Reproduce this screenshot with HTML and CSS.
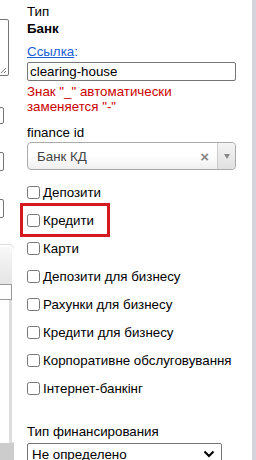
FILE: index.html
```html
<!DOCTYPE html>
<html lang="ru">
<head>
    <meta charset="UTF-8">
    <meta name="viewport" content="width=device-width, initial-scale=1.0">
    <title>Банк</title>
    <link rel="stylesheet" href="styles.css">
</head>
<body>

    <!-- cut off column on the left -->
    <div class="side">
        <div class="side-textarea">
            <svg class="resize" width="7" height="7" viewBox="0 0 7 7">
                <path d="M1 6 L6 1 M4 6 L6 4" stroke="#777" stroke-width="1"/>
            </svg>
        </div>
        <div class="side-input first"></div>
        <div class="side-input"></div>
        <div class="side-input"></div>
        <div class="side-panel">
            <div class="side-panel-head">
                <div class="side-panel-box"></div>
            </div>
            <div class="side-panel-body"></div>
        </div>
        <div class="side-foot"></div>
    </div>

    <div class="main">
        <div class="field-title">Тип</div>
        <div class="field-value">Банк</div>

        <div class="field-title link-row"><a href="#">Ссылка</a>:</div>
        <input type="text" class="slug-input" value="clearing-house">
        <div class="hint">Знак "_" автоматически<br>заменяется "-"</div>

        <div class="field-title finance">finance id</div>
        <div class="select2">
            <span class="select2-text">Банк КД</span>
            <span class="select2-clear">×</span>
            <span class="select2-arrow"><b></b></span>
        </div>

        <div class="checks">
            <label class="check-row"><input type="checkbox"> Депозити</label>
            <label class="check-row"><input type="checkbox"> Кредити<span class="marker"></span></label>
            <label class="check-row"><input type="checkbox"> Карти</label>
            <label class="check-row"><input type="checkbox"> Депозити для бизнесу</label>
            <label class="check-row"><input type="checkbox"> Рахунки для бизнесу</label>
            <label class="check-row"><input type="checkbox"> Кредити для бизнесу</label>
            <label class="check-row"><input type="checkbox"> Корпоративне обслуговування</label>
            <label class="check-row"><input type="checkbox"> Інтернет-банкінг</label>
        </div>

        <div class="field-title funding">Тип финансирования</div>
        <div class="plain-select">
            <span>Не определено</span>
            <svg width="12" height="8" viewBox="0 0 12 8">
                <path d="M1.5 1.5 L6 6 L10.5 1.5" fill="none" stroke="#000" stroke-width="2"/>
            </svg>
        </div>
    </div>

    <div class="scroll-edge"></div>

</body>
</html>
```

FILE: styles.css
```css
* {
    box-sizing: border-box;
}

body {
    margin: 0;
    width: 256px;
    height: 460px;
    overflow: hidden;
    display: flex;
    font-family: 'Liberation Sans', Arial, sans-serif;
    font-size: 13.33px;
    color: #000;
    background: #fff;
}

/* left column, mostly hidden */
.side {
    width: 14px;
    flex-shrink: 0;
    overflow: hidden;
}

.side-textarea {
    position: relative;
    margin-top: 19px;
    margin-left: -40px;
    width: 49px;
    height: 57px;
    border: 1px solid #767676;
    border-radius: 2px;
}

.resize {
    position: absolute;
    right: 1px;
    bottom: 1px;
}

.side-input {
    margin-top: 28px;
    margin-left: -40px;
    width: 44px;
    height: 19px;
    border: 1px solid #767676;
    border-radius: 2px;
}

.side-input.first {
    margin-top: 31px;
    height: 17px;
}

.side-panel {
    margin-top: 26px;
    margin-left: -40px;
    width: 55px;
    height: 199px;
    border: 1px solid #ddd;
    border-radius: 0 6px 0 0;
    padding: 2px 2px 0 0;
}

.side-panel-head {
    height: 53px;
    background: linear-gradient(#f8f8f8, #dcdcdc);
    padding-top: 37px;
}

.side-panel-box {
    width: 51px;
    height: 16px;
    border: 1px solid #999;
    background: #fff;
}

.side-panel-body {
    height: 144px;
    border-right: 3px solid #ddd;
    background: #fff;
}

.side-foot {
    margin-left: -40px;
    height: 20px;
    background: #ccc;
}

/* main form */
.main {
    margin-left: 13px;
    width: 209px;
    flex-shrink: 0;
}

.field-title {
    line-height: 15px;
}

.field-title:first-child {
    margin-top: 4px;
}

.field-value {
    font-weight: bold;
    line-height: 15px;
    margin-top: 2px;
}

.link-row {
    margin-top: 8px;
    color: #1a4fc9;
}

.link-row a {
    color: #1a5fd8;
}

.slug-input {
    display: block;
    width: 209px;
    height: 19px;
    margin: 3px 0 0;
    padding: 0 2px;
    border: 1px solid #767676;
    border-radius: 2px;
    font-family: 'Liberation Sans', Arial, sans-serif;
    font-size: 13.33px;
    color: #000;
}

.hint {
    color: #cc0000;
    line-height: 15px;
    margin-top: 3px;
}

.finance {
    margin-top: 11px;
}

.select2 {
    display: flex;
    align-items: center;
    height: 28px;
    margin-top: 2px;
    border: 1px solid #aaa;
    border-radius: 4px;
    background: linear-gradient(#fff 50%, #eee);
    color: #444;
}

.select2-text {
    flex: 1;
    padding-left: 9px;
}

.select2-clear {
    font-size: 15px;
    font-weight: bold;
    color: #888;
    margin-right: 8px;
}

.select2-arrow {
    display: flex;
    align-items: center;
    justify-content: center;
    width: 18px;
    height: 100%;
    border-left: 1px solid #ccc;
    border-radius: 0 4px 4px 0;
    background: linear-gradient(#f4f4f4, #e0e0e0);
}

.select2-arrow b {
    width: 0;
    height: 0;
    border-left: 3px solid transparent;
    border-right: 3px solid transparent;
    border-top: 5px solid #888;
}

.checks {
    margin-top: 8px;
}

.check-row {
    position: relative;
    display: flex;
    align-items: center;
    height: 28px;
    white-space: nowrap;
}

.check-row input {
    width: 13px;
    height: 13px;
    margin: 0 3px 0 0;
}

.marker {
    position: absolute;
    left: -7px;
    top: -3px;
    width: 90px;
    height: 34px;
    border: 3px solid #d41a1f;
}

.funding {
    margin-top: 22px;
}

.plain-select {
    display: flex;
    align-items: center;
    justify-content: space-between;
    width: 195px;
    height: 22px;
    margin-top: 4px;
    padding: 0 6px 0 4px;
    border: 1px solid #767676;
    border-radius: 2px;
}

.scroll-edge {
    margin-left: auto;
    width: 4px;
    height: 460px;
    background: #d4d4dc;
}
```
